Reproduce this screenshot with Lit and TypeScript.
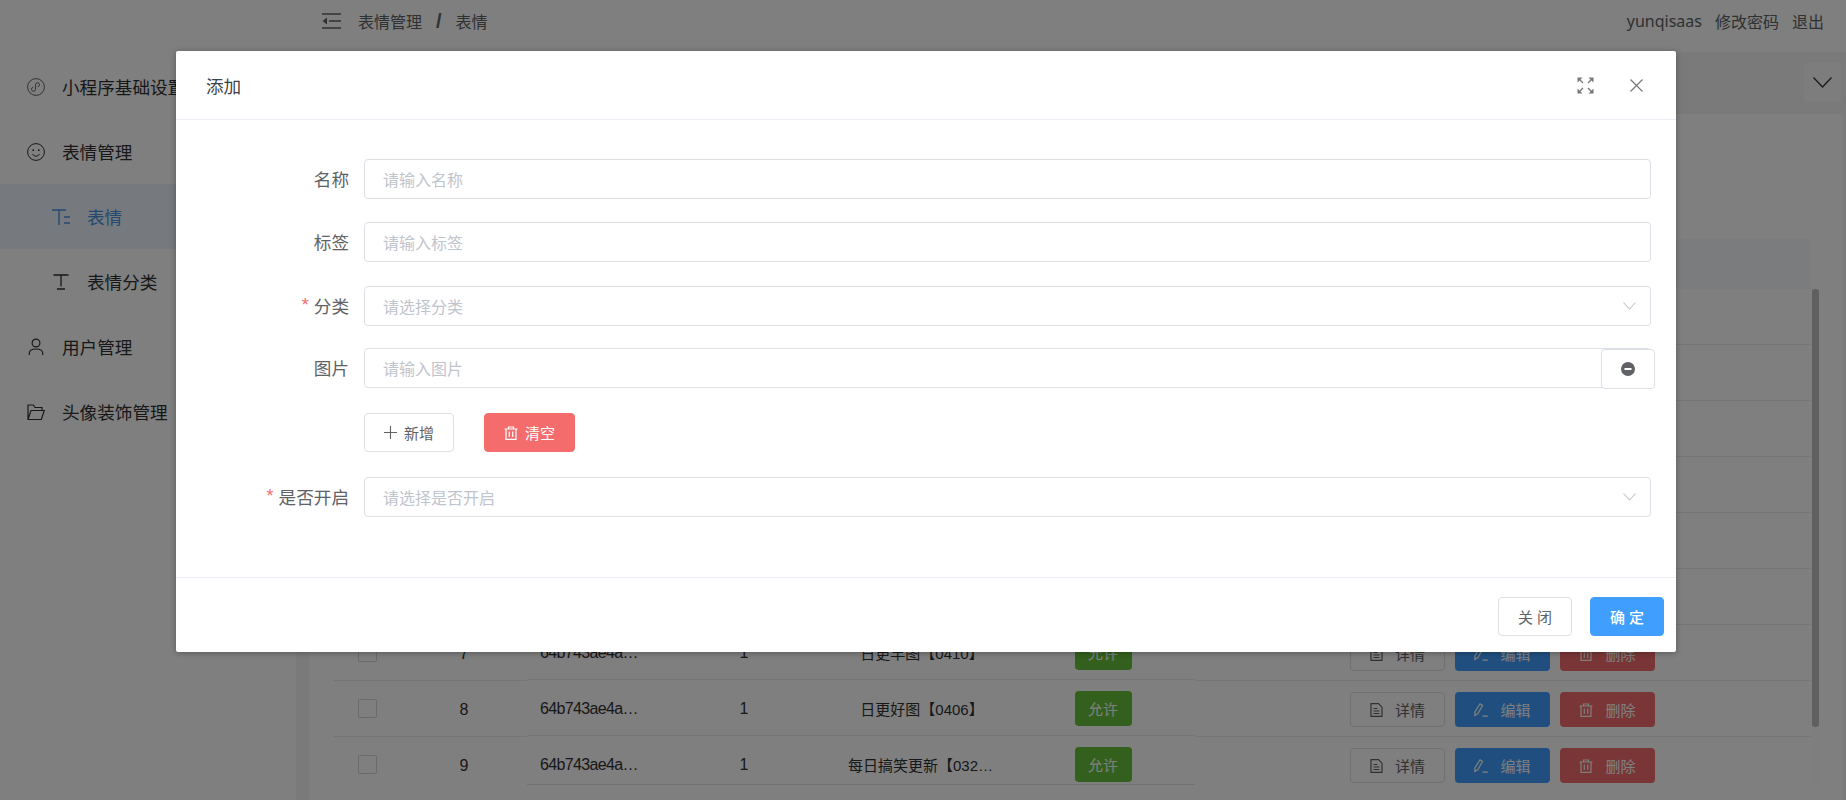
import { LitElement, html, css, svg } from "lit";
import { customElement } from "lit/decorators.js";

const ic = (w: number, h: number, body: unknown, cls = "") =>
  html`<svg class="ic ${cls}" width=${w} height=${h} viewBox="0 0 ${w} ${h}" fill="none" stroke="currentColor">${body}</svg>`;

const trash = (s = 14) => html`<svg class="ic" width=${s} height=${s} viewBox="0 0 14 14" fill="none" stroke="currentColor" stroke-width="1.2"><path d="M0.5 3h13M4.5 3V1h5v2M2 3v10.300h10V3M5.300 5.500v5.500M8.700 5.500v5.500"/></svg>`;
const doc = html`<svg class="ic" width="13" height="14" viewBox="0 0 13 14" fill="none" stroke="currentColor" stroke-width="1.2"><path d="M1 .7h7.500l3.500 3.500v9.100H1zM3.500 5.500h4M3.500 8h6M3.500 10.500h6"/></svg>`;
const pen = html`<svg class="ic" width="14" height="14" viewBox="0 0 14 14" fill="none" stroke="currentColor" stroke-width="1.2"><path d="M6 .8l2.600 1.600-4.800 8.400-2.900 1.600-.1-3.300zM8.500 13.200H14"/></svg>`;

const rows: (string[] | null)[] = [
  null, null, null, null, null, null,
  ["64b743ae4a8f27", "1", "日更早图【0410】"],
  ["64b743ae4a8f28", "1", "日更好图【0406】"],
  ["64b743ae4a8f29", "1", "每日搞笑更新【0328】"],
];
const seq = rows.map((r, i) => ({ r, n: i + 1 }));

@customElement("app-root")
export class AppRoot extends LitElement {
  static styles = css`
    :host {
      display: block;
      position: relative;
      width: 1846px;
      height: 800px;
      overflow: hidden;
      background: #fff;
      color: #303133;
      font-family: "Liberation Sans", "Noto Sans CJK SC", sans-serif;
    }
    .ic { display: block; flex: none; }
    .app { display: flex; height: 800px; }

    .side { width: 296px; flex: none; padding-top: 54px; box-sizing: border-box; font-size: 17.6px; color: #303133; background: #fff; }
    .item { height: 65px; display: flex; align-items: center; padding-left: 27px; white-space: nowrap; }
    .item .ic { margin-right: 17px; }
    .item.sub { padding-left: 52px; }
    .item.sub .ic { margin-right: 17px; }
    .item.on { background: #ecf5ff; color: #4a90e0; }
    .mp { color: #555; }

    .main { flex: 1; min-width: 0; display: flex; flex-direction: column; }
    .top { height: 52px; box-sizing: border-box; flex: none; display: flex; align-items: center; padding: 0 22px 10px 26px; font-size: 16px; color: #606266; }
    .crumb { margin-left: 17px; }
    .slash { margin: 0 14px; font-weight: bold; font-size: 20px; line-height: 20px; }
    .spacer { flex: 1; }
    .user { font-family: "Noto Sans", sans-serif; margin-right: 13px; }
    .link { margin-right: 13px; }
    .link:last-child { margin-right: 0; }

    .page { flex: 1; background: #f5f5f5; display: flex; flex-direction: column; min-height: 0; }
    .strip { height: 62px; box-sizing: border-box; flex: none; display: flex; justify-content: flex-end; align-items: flex-start; padding: 11px 5px 0 0; }
    .chev { width: 37px; height: 39px; background: #fbfbfb; color: #333; display: flex; align-items: center; justify-content: center; }
    .card { flex: 1; margin: 0 3px 0 13px; background: #fff; border-radius: 4px 4px 0 0; padding: 125px 0 0 25px; min-height: 0; }

    .thead { width: 1477px; height: 50px; background: #f6f8fc; }
    .tbody { display: flex; height: 496px; }
    .col { height: 496px; overflow: hidden; flex: none; }
    .col .r { height: 56px; display: flex; align-items: center; border-bottom: 1px solid #e8eaf0; box-sizing: border-box; font-size: 15px; color: #303133; }
    .fixed-l { width: 193px; }
    .mid { width: 668px; margin-top: -1px; border-bottom: 1px solid #dfe2ea; box-sizing: content-box; height: 496px; }
    .mid .r, .fixed-r .r { padding-top: 2px; }
    .fixed-r { width: 616px; }
    .track { width: 7px; margin-left: 1px; height: 496px; background: #fcfcfc; flex: none; }
    .thumb { height: 438px; background: #c0c0c0; border-radius: 3px; }
    .cb-c { width: 67px; display: flex; justify-content: center; }
    .cb { width: 17px; height: 17px; border: 1px solid #d4d6dc; border-radius: 2px; background: #fff; }
    .no { width: 126px; text-align: center; font-size: 16px; padding-top: 3px; box-sizing: border-box; }
    .c-id { width: 130px; box-sizing: border-box; padding: 0 16px 0 13px; overflow: hidden; text-overflow: ellipsis; white-space: nowrap; font-size: 16px; letter-spacing: -0.65px; }
    .c-one { width: 174px; text-align: center; font-size: 16px; }
    .c-name { width: 180px; text-align: center; white-space: nowrap; overflow: hidden; text-overflow: ellipsis; padding: 0 15px 0 17px; box-sizing: border-box; }
    .c-tag { width: 184px; display: flex; justify-content: center; }
    .tag { width: 57px; height: 35px; border-radius: 4px; background: #67c23a; color: #fff; display: flex; align-items: center; justify-content: center; font-size: 15px; }
    .ops { display: flex; gap: 10px; padding-left: 155px; }
    .op { width: 95px; height: 35px; box-sizing: border-box; border-radius: 4px; display: flex; align-items: center; justify-content: center; gap: 12px; font-size: 15px; border: 1px solid transparent; }
    .op.d { background: #fff; border-color: #dcdfe6; color: #606266; }
    .op.e { background: #409eff; color: #fff; }
    .op.x { background: #f56c6c; color: #fff; }

    .mask { position: absolute; inset: 0; background: rgba(0, 0, 0, 0.5); padding: 51px 0 0 176px; box-sizing: border-box; }
    .modal { width: 1500px; height: 601px; background: #fff; border-radius: 2px; box-shadow: 0 1px 6px rgba(0, 0, 0, 0.3); display: flex; flex-direction: column; }
    .m-head { height: 68px; flex: none; border-bottom: 1px solid #ebeef5; display: flex; align-items: center; padding: 0 33px 0 30px; color: #303133; font-size: 17.6px; }
    .m-head .title { flex: 1; color: #404246; }
    .m-head .full { color: #777; margin-right: 36px; }
    .m-head .close { color: #777; }
    .m-body { flex: 1; padding: 39px 25px 0 0; min-height: 0; }
    .row { display: flex; height: 40px; }
    .row:nth-child(1) { margin-bottom: 23px; }
    .row:nth-child(2) { margin-bottom: 24px; }
    .row:nth-child(3) { margin-bottom: 22px; }
    .row:nth-child(4) { margin-bottom: 25px; }
    .row:nth-child(5) { margin-bottom: 24px; }
    .lab { width: 173px; flex: none; margin-right: 15px; padding-bottom: 2px; box-sizing: border-box; display: flex; justify-content: flex-end; align-items: center; font-size: 17.6px; color: #606266; white-space: nowrap; }
    .req { color: #f56c6c; margin-right: 5px; font-size: 18px; }
    .inp { flex: 1; min-width: 0; box-sizing: border-box; border: 1px solid #dcdfe6; border-radius: 4px; background: #fff; display: flex; align-items: center; justify-content: space-between; padding: 0 14px 1px 18px; font-size: 16px; color: #c0c4cc; }
    .minus { width: 54px; height: 40px; margin: 1px -4px 0 -50px; box-sizing: border-box; border: 1px solid #dcdfe6; border-radius: 4px; background: #fff; color: #606266; display: flex; align-items: center; justify-content: center; position: relative; }
    .btns { display: flex; gap: 30px; margin-left: 188px; }
    .b { height: 39px; box-sizing: border-box; border-radius: 4px; display: flex; align-items: center; justify-content: center; gap: 7px; font-size: 15px; border: 1px solid #dcdfe6; background: #fff; color: #606266; }
    .b.add { width: 90px; }
    .b.clr { width: 91px; background: #f56c6c; border-color: #f56c6c; color: #fff; }
    .m-foot { height: 75px; flex: none; border-top: 1px solid #ebeef5; display: flex; justify-content: flex-end; gap: 18px; padding: 19px 12px 0 0; box-sizing: border-box; }
    .b.cl { width: 74px; }
    .b.ok { width: 74px; background: #409eff; border-color: #409eff; color: #fff; font-weight: 500; }
  `;

  render() {
    return html`
      <div class="app">
        <aside class="side">
          <div class="item">
            ${ic(18, 18, svg`<circle class="mp" cx="9" cy="9" r="8.400" stroke-width=".9"/><path class="mp" stroke-width=".9" d="M6.200 9.300a2 2 0 1 0 2.300 2V6.700a2 2 0 1 1 2.300 2"/>`)}
            <span>小程序基础设置</span>
          </div>
          <div class="item">
            ${ic(18, 18, svg`<circle cx="9" cy="9" r="8.400" stroke-width="1"/><circle cx="6.200" cy="7.200" r=".9" fill="currentColor" stroke="none"/><circle cx="11.800" cy="7.200" r=".9" fill="currentColor" stroke="none"/><path stroke-width="1" d="M5.500 11c1 1.600 2.200 2.200 3.500 2.200s2.500-.6 3.500-2.200"/>`)}
            <span>表情管理</span>
          </div>
          <div class="item sub on">
            ${ic(18, 16, svg`<path stroke-width="1.400" d="M0 1h14M7 1v15M12 8h6M12 14h6"/>`)}
            <span>表情</span>
          </div>
          <div class="item sub">
            ${ic(18, 16, svg`<path stroke-width="1.300" d="M1.500 1h15M9 1v11.500M5 15h8"/>`)}
            <span>表情分类</span>
          </div>
          <div class="item">
            ${ic(18, 18, svg`<circle cx="9" cy="5" r="3.900" stroke-width="1.200"/><path stroke-width="1.200" d="M2.300 17v-1.800c0-3 2.400-4.200 6.700-4.200s6.700 1.200 6.700 4.200V17"/>`)}
            <span>用户管理</span>
          </div>
          <div class="item">
            ${ic(18, 18, svg`<path stroke-width="1.200" d="M1 16.500V2h5.300l1.800 2.500h6.900v3M1 16.500h13.300l3-9H4z"/>`)}
            <span>头像装饰管理</span>
          </div>
        </aside>
        <main class="main">
          <header class="top">
            ${ic(19, 16, svg`<path stroke-width="1.600" d="M0 1h19M7 8h12M0 15h19"/><path fill="currentColor" stroke="none" d="M5 4.500v7L.5 8z"/>`)}
            <span class="crumb">表情管理</span><span class="slash">/</span><span>表情</span>
            <span class="spacer"></span>
            <span class="user">yunqisaas</span><span class="link">修改密码</span><span class="link">退出</span>
          </header>
          <div class="page">
            <div class="strip">
              <div class="chev">${ic(19, 11, svg`<path stroke-width="1.300" d="M.5.5l9 9.500 9-9.500"/>`)}</div>
            </div>
            <div class="card">
              <div class="thead"></div>
              <div class="tbody">
                <div class="col fixed-l">
                  ${seq.map(({ r, n }) => html`<div class="r">${r ? html`<div class="cb-c"><div class="cb"></div></div><div class="no">${n}</div>` : ""}</div>`)}
                </div>
                <div class="col mid">
                  ${seq.map(
                    ({ r }) => html`<div class="r">${r
                      ? html`<div class="c-id">${r[0]}</div>
                          <div class="c-one">${r[1]}</div>
                          <div class="c-name">${r[2]}</div>
                          <div class="c-tag"><div class="tag">允许</div></div>`
                      : ""}</div>`
                  )}
                </div>
                <div class="col fixed-r">
                  ${seq.map(
                    ({ r }) => html`<div class="r">${r
                      ? html`<div class="ops">
                          <div class="op d">${doc}<span>详情</span></div>
                          <div class="op e">${pen}<span>编辑</span></div>
                          <div class="op x">${trash()}<span>删除</span></div>
                        </div>`
                      : ""}</div>`
                  )}
                </div>
                <div class="track"><div class="thumb"></div></div>
              </div>
            </div>
          </div>
        </main>
      </div>

      <div class="mask">
        <section class="modal">
          <div class="m-head">
            <span class="title">添加</span>
            <span class="full">${ic(17, 17, svg`<path stroke-width="1.300" d="M2 2l4 4M15 2l-4 4M2 15l4-4M15 15l-4-4"/><path fill="currentColor" stroke="none" d="M.5.5h5l-5 5zM16.500.5h-5l5 5zM.5 16.500h5l-5-5zM16.500 16.500h-5l5-5z"/>`)}</span>
            <span class="close">${ic(13, 13, svg`<path stroke-width="1.200" d="M.5.5l12 12M12.500.5l-12 12"/>`)}</span>
          </div>
          <div class="m-body">
            <div class="row"><label class="lab">名称</label><div class="inp">请输入名称</div></div>
            <div class="row"><label class="lab">标签</label><div class="inp">请输入标签</div></div>
            <div class="row">
              <label class="lab"><span class="req">*</span>分类</label>
              <div class="inp">请选择分类${ic(13, 8, svg`<path stroke-width="1.100" d="M.5.5l6 6.500 6-6.500"/>`)}</div>
            </div>
            <div class="row">
              <label class="lab">图片</label>
              <div class="inp">请输入图片</div>
              <div class="minus">${ic(14, 14, svg`<circle cx="7" cy="7" r="7" fill="currentColor" stroke="none"/><path stroke="#fff" stroke-width="2" d="M3.500 7h7"/>`)}</div>
            </div>
            <div class="row">
              <div class="btns">
                <div class="b add">${ic(13, 13, svg`<path stroke-width="1.100" d="M6.500 0v13M0 6.500h13"/>`)}<span>新增</span></div>
                <div class="b clr">${trash()}<span>清空</span></div>
              </div>
            </div>
            <div class="row">
              <label class="lab"><span class="req">*</span>是否开启</label>
              <div class="inp">请选择是否开启${ic(13, 8, svg`<path stroke-width="1.100" d="M.5.5l6 6.500 6-6.500"/>`)}</div>
            </div>
          </div>
          <div class="m-foot">
            <div class="b cl">关 闭</div>
            <div class="b ok">确 定</div>
          </div>
        </section>
      </div>
    `;
  }
}
